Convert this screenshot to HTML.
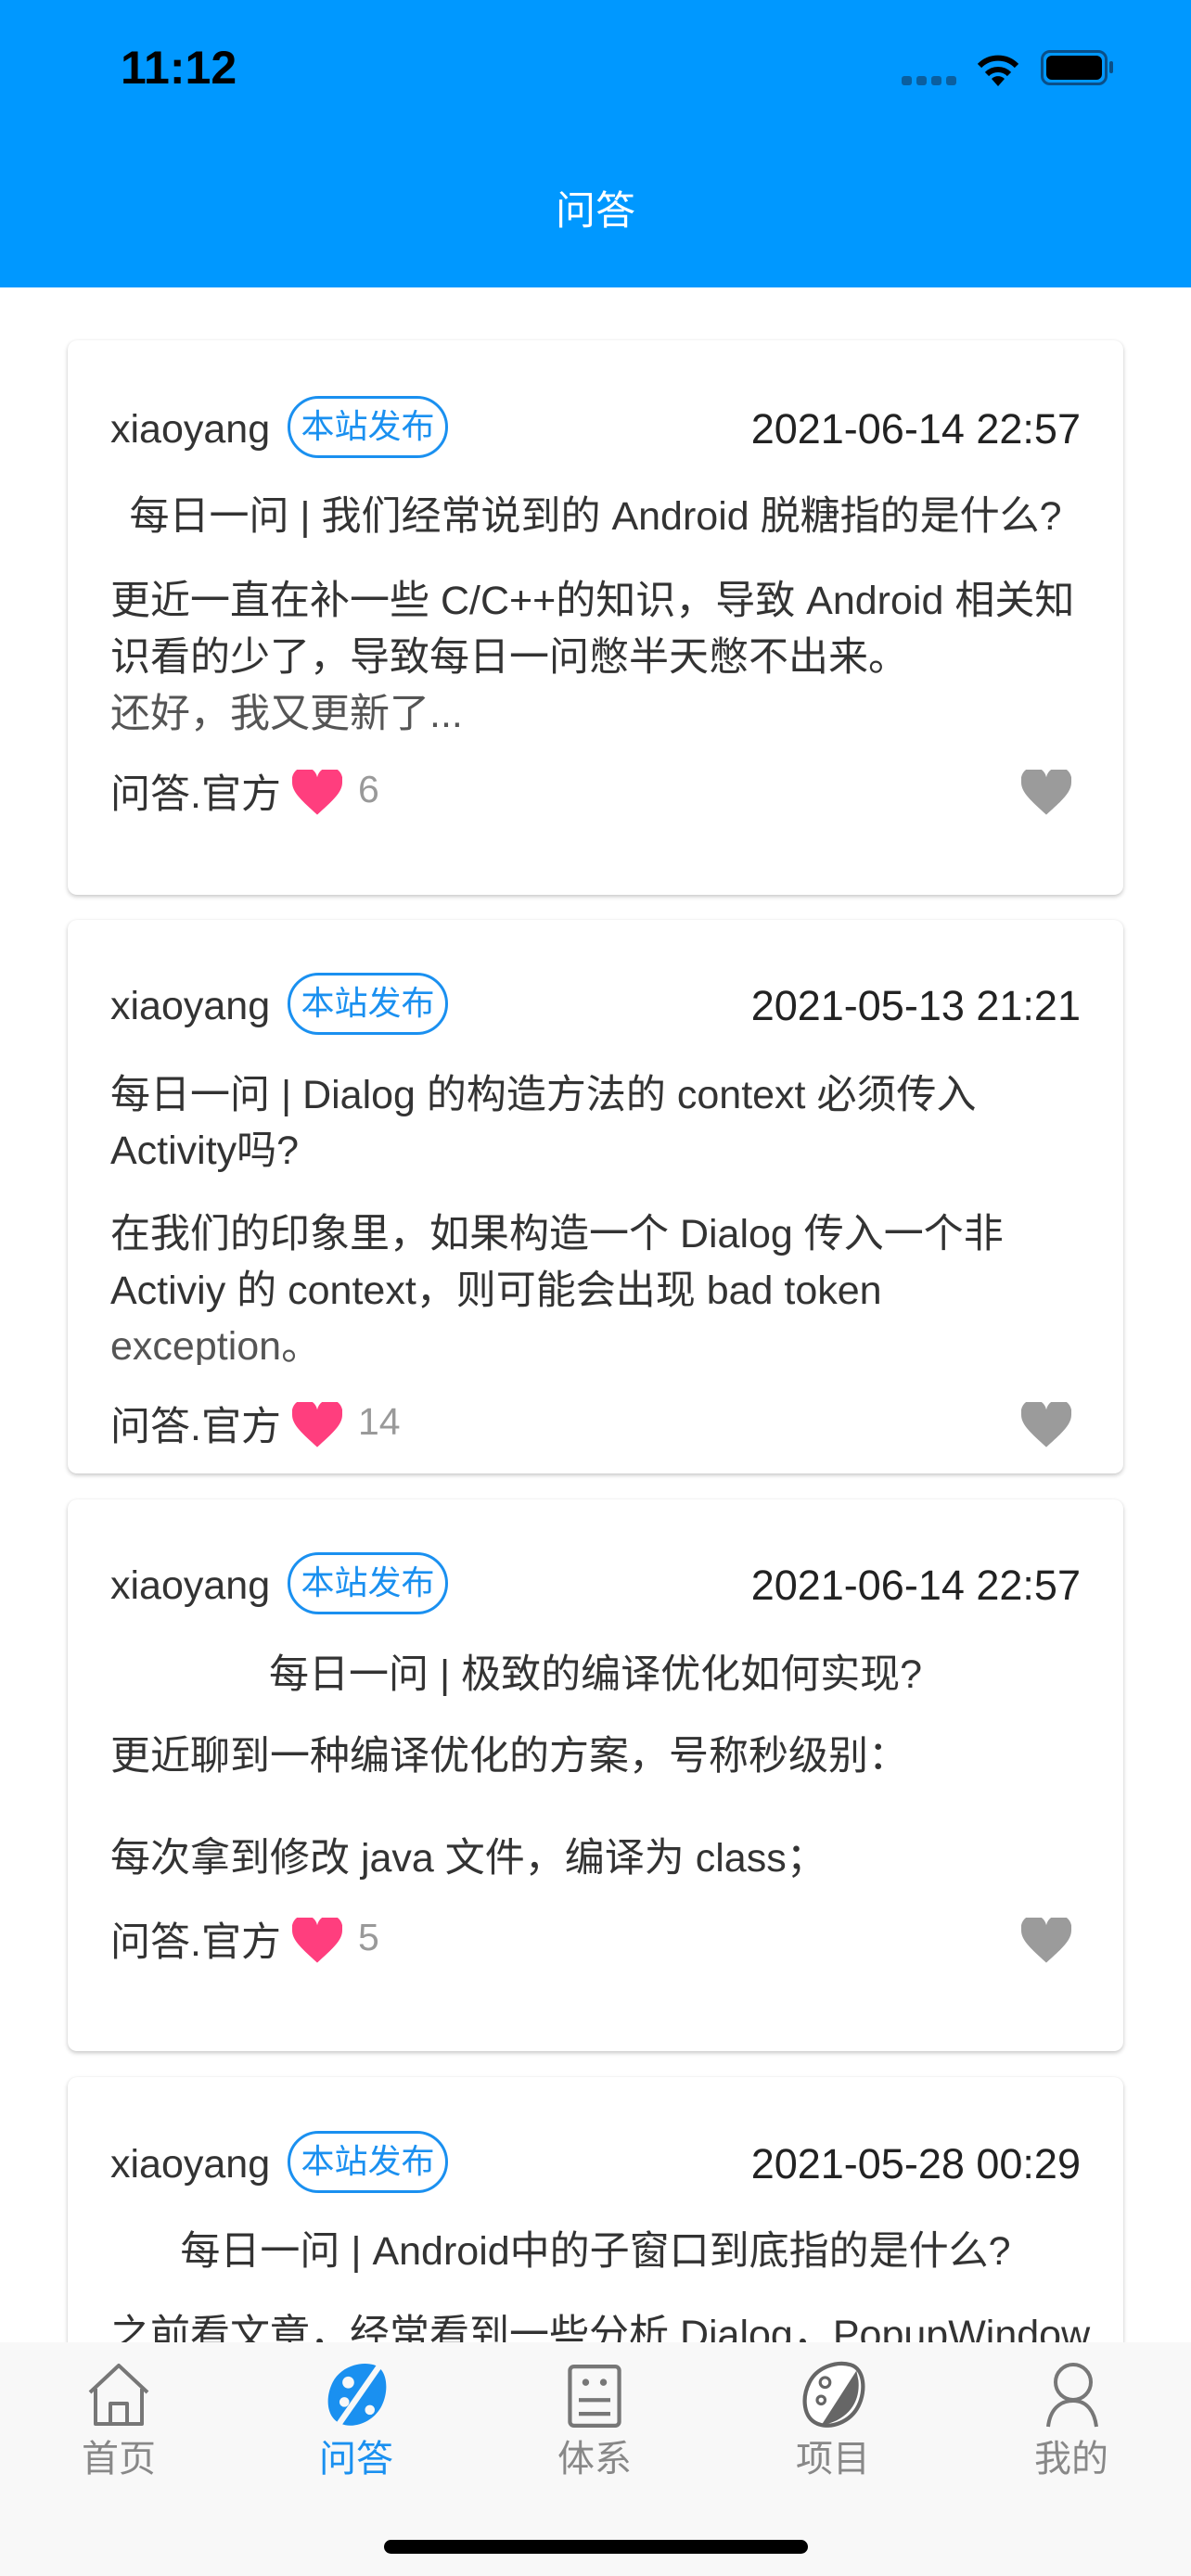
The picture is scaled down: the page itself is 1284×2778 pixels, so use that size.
<!DOCTYPE html>
<html><head><meta charset="utf-8"><style>
*{margin:0;padding:0;box-sizing:border-box}
html,body{width:1284px;height:2778px;overflow:hidden}
body{position:relative;background:#fff;font-family:"Liberation Sans","Noto Sans CJK SC",sans-serif;color:#333}
.hdr{position:absolute;left:0;top:0;width:1284px;height:310px;background:#0098ff}
.card{position:absolute;left:73px;width:1138px;background:#fff;border-radius:10px;box-shadow:0 2px 5px rgba(0,0,0,.22),0 0 1px rgba(0,0,0,.08)}
.t{position:absolute;height:60px;line-height:60px;font-size:43px;white-space:nowrap;margin-top:3px}
.tag{position:absolute;left:310px;width:173px;height:67px;border:3px solid #1a90f0;border-radius:34px;color:#1a90f0;font-size:36px;text-align:center;line-height:60px}
.date{right:119px;color:#222;font-size:45px}
.cnt{color:#999;font-size:41px}
.heart{position:absolute;width:54px;height:50px}
.tab{position:absolute;left:0;top:2526px;width:1284px;height:252px;background:#f8f8f8}
.tl{position:absolute;top:2625px;width:120px;text-align:center;font-size:40px;color:#888;line-height:54px}
</style></head><body>
<div class="hdr"></div>
<div class="t" style="left:130px;top:40px;font-size:50px;font-weight:bold;color:#000">11:12</div>
<div style="position:absolute;left:972px;top:82px;width:60px;height:10px;display:flex;gap:5px">
<i style="width:11px;height:10px;background:#0a5fa0;border-radius:3px"></i><i style="width:11px;height:10px;background:#0a5fa0;border-radius:3px"></i><i style="width:11px;height:10px;background:#0a5fa0;border-radius:3px"></i><i style="width:11px;height:10px;background:#0a5fa0;border-radius:3px"></i></div>
<svg style="position:absolute;left:1050px;top:55px" width="52" height="40" viewBox="0 0 52 40"><path d="M26 38 L19 30 A10 10 0 0 1 33 30 Z" fill="#000"/><path d="M14 25 A17 17 0 0 1 38 25" stroke="#000" stroke-width="6" fill="none"/><path d="M6 16 A28 28 0 0 1 46 16" stroke="#000" stroke-width="6" fill="none"/></svg>
<div style="position:absolute;left:1122px;top:54px;width:72px;height:38px;border:3px solid #0a4f88;border-radius:10px;padding:3px"><div style="width:100%;height:100%;background:#000;border-radius:6px"></div></div>
<div style="position:absolute;left:1196px;top:66px;width:4px;height:13px;background:#0a4f88;border-radius:2px"></div>
<div class="t" style="left:0;width:1284px;text-align:center;top:195px;color:#fff;font-size:43px">问答</div>

<div class="card" style="top:367px;height:598px"></div>
<div class="card" style="top:992px;height:597px"></div>
<div class="card" style="top:1617px;height:595px"></div>
<div class="card" style="top:2240px;height:500px"></div>

<!-- card1 -->
<div class="t" style="left:119px;top:430px">xiaoyang</div>
<div class="tag" style="top:427px">本站发布</div>
<div class="t date" style="top:430px">2021-06-14 22:57</div>
<div class="t" style="left:73px;width:1138px;text-align:center;top:524px">每日一问 | 我们经常说到的 Android 脱糖指的是什么?</div>
<div class="t" style="left:119px;top:615px">更近一直在补一些 C/C++的知识，导致 Android 相关知</div>
<div class="t" style="left:119px;top:676px">识看的少了，导致每日一问憋半天憋不出来。</div>
<div class="t" style="left:119px;top:737px;color:#555">还好，我又更新了...</div>
<div class="t" style="left:119px;top:824px">问答.官方</div>
<svg class="heart" style="left:315px;top:830px" viewBox="0 0 24 22"><path d="M12 21.5 C5 15 0 11 0 6 A6 6 0 0 1 12 3.5 A6 6 0 0 1 24 6 C24 11 19 15 12 21.5Z" fill="#ff3e7e"/></svg>
<div class="t cnt" style="left:386px;top:818px">6</div>
<svg class="heart" style="left:1101px;top:830px" viewBox="0 0 24 22"><path d="M12 21.5 C5 15 0 11 0 6 A6 6 0 0 1 12 3.5 A6 6 0 0 1 24 6 C24 11 19 15 12 21.5Z" fill="#9b9b9b"/></svg>

<!-- card2 -->
<div class="t" style="left:119px;top:1052px">xiaoyang</div>
<div class="tag" style="top:1049px">本站发布</div>
<div class="t date" style="top:1052px">2021-05-13 21:21</div>
<div class="t" style="left:119px;top:1148px">每日一问 | Dialog 的构造方法的 context 必须传入</div>
<div class="t" style="left:119px;top:1208px">Activity吗?</div>
<div class="t" style="left:119px;top:1298px">在我们的印象里，如果构造一个 Dialog 传入一个非</div>
<div class="t" style="left:119px;top:1359px">Activiy 的 context，则可能会出现 bad token</div>
<div class="t" style="left:119px;top:1419px;color:#555;height:50px;overflow:hidden">exception。</div>
<div class="t" style="left:119px;top:1506px">问答.官方</div>
<svg class="heart" style="left:315px;top:1512px" viewBox="0 0 24 22"><path d="M12 21.5 C5 15 0 11 0 6 A6 6 0 0 1 12 3.5 A6 6 0 0 1 24 6 C24 11 19 15 12 21.5Z" fill="#ff3e7e"/></svg>
<div class="t cnt" style="left:386px;top:1500px">14</div>
<svg class="heart" style="left:1101px;top:1512px" viewBox="0 0 24 22"><path d="M12 21.5 C5 15 0 11 0 6 A6 6 0 0 1 12 3.5 A6 6 0 0 1 24 6 C24 11 19 15 12 21.5Z" fill="#9b9b9b"/></svg>

<!-- card3 -->
<div class="t" style="left:119px;top:1677px">xiaoyang</div>
<div class="tag" style="top:1674px">本站发布</div>
<div class="t date" style="top:1677px">2021-06-14 22:57</div>
<div class="t" style="left:73px;width:1138px;text-align:center;top:1773px">每日一问 | 极致的编译优化如何实现?</div>
<div class="t" style="left:119px;top:1861px">更近聊到一种编译优化的方案，号称秒级别：</div>
<div class="t" style="left:119px;top:1971px">每次拿到修改 java 文件，编译为 class；</div>
<div class="t" style="left:119px;top:2062px">问答.官方</div>
<svg class="heart" style="left:315px;top:2068px" viewBox="0 0 24 22"><path d="M12 21.5 C5 15 0 11 0 6 A6 6 0 0 1 12 3.5 A6 6 0 0 1 24 6 C24 11 19 15 12 21.5Z" fill="#ff3e7e"/></svg>
<div class="t cnt" style="left:386px;top:2056px">5</div>
<svg class="heart" style="left:1101px;top:2068px" viewBox="0 0 24 22"><path d="M12 21.5 C5 15 0 11 0 6 A6 6 0 0 1 12 3.5 A6 6 0 0 1 24 6 C24 11 19 15 12 21.5Z" fill="#9b9b9b"/></svg>

<!-- card4 -->
<div class="t" style="left:119px;top:2301px">xiaoyang</div>
<div class="tag" style="top:2298px">本站发布</div>
<div class="t date" style="top:2301px">2021-05-28 00:29</div>
<div class="t" style="left:73px;width:1138px;text-align:center;top:2395px">每日一问 | Android中的子窗口到底指的是什么?</div>
<div class="t" style="left:119px;top:2485px">之前看文章，经常看到一些分析 Dialog，PopupWindow</div>

<div class="tab"></div>
<svg style="position:absolute;left:93px;top:2548px" width="70" height="70" viewBox="0 0 70 70" fill="none" stroke="#777" stroke-width="4"><path d="M4 32 L35 3 L66 32 M10 28 V66 H60 V28 M26 66 V44 H44 V66" stroke-linejoin="round"/></svg>
<svg style="position:absolute;left:350px;top:2546px" width="70" height="74" viewBox="0 0 66 70"><path d="M50 4 C64 8 66 30 58 46 C50 62 30 70 16 64 C2 58 0 38 8 22 C16 6 36 0 50 4Z" fill="#1a90f0"/><path d="M58 2 L12 68" stroke="#f8f8f8" stroke-width="6"/><circle cx="24" cy="22" r="6" fill="#f8f8f8"/><circle cx="20" cy="42" r="5" fill="#f8f8f8"/><circle cx="46" cy="50" r="5" fill="#f8f8f8"/></svg>
<svg style="position:absolute;left:612px;top:2550px" width="58" height="68" viewBox="0 0 54 64" fill="none" stroke="#777" stroke-width="4"><rect x="2" y="2" width="50" height="60" rx="4"/><path d="M11 36 H43 M11 50 H43"/><circle cx="18" cy="18" r="1.5" fill="#777"/><circle cx="36" cy="18" r="1.5" fill="#777"/></svg>
<svg style="position:absolute;left:864px;top:2546px" width="70" height="74" viewBox="0 0 66 70"><path d="M50 4 C64 8 66 30 58 46 C50 62 30 70 16 64 C2 58 0 38 8 22 C16 6 36 0 50 4Z" fill="#fff" stroke="#666" stroke-width="4"/><path d="M58 20 C60 40 50 60 20 66 L56 10Z" fill="#666"/><circle cx="24" cy="22" r="5" fill="none" stroke="#666" stroke-width="3"/><circle cx="20" cy="40" r="4" fill="none" stroke="#666" stroke-width="3"/></svg>
<svg style="position:absolute;left:1126px;top:2546px" width="60" height="74" viewBox="0 0 60 72" fill="none" stroke="#777" stroke-width="4"><circle cx="31" cy="22" r="19"/><path d="M4 70 C6 52 16 42 31 42 C46 42 54 54 56 70"/></svg>
<div class="tl" style="left:68px">首页</div>
<div class="tl" style="left:324px;color:#1a90f0">问答</div>
<div class="tl" style="left:581px">体系</div>
<div class="tl" style="left:838px">项目</div>
<div class="tl" style="left:1095px">我的</div>
<div style="position:absolute;left:414px;top:2739px;width:457px;height:15px;background:#000;border-radius:8px"></div>
</body></html>
